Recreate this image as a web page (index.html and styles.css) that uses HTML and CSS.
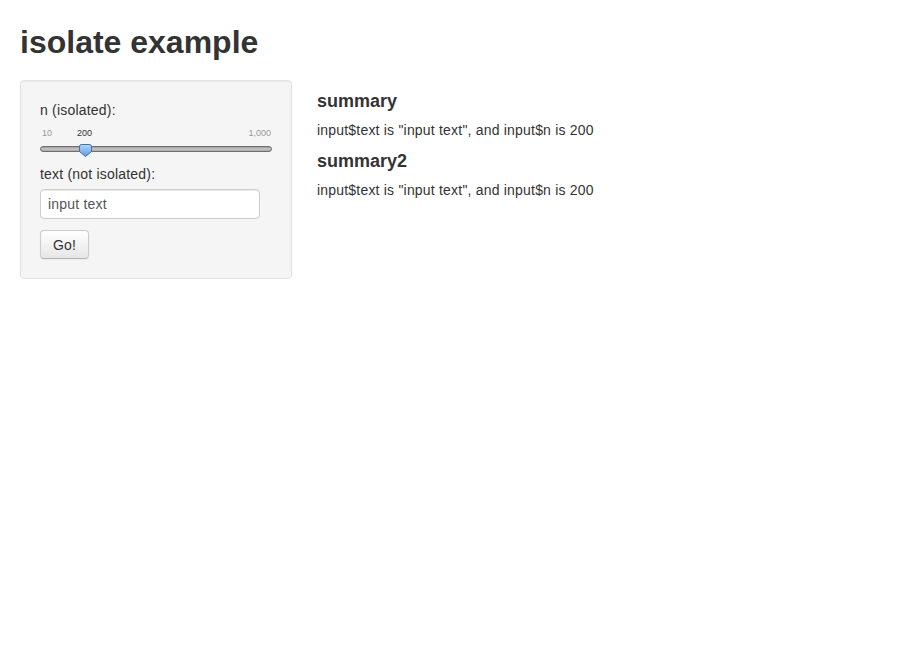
FILE: index.html
```html
<!DOCTYPE html>
<html>
<head>
<meta charset="utf-8">
<link rel="stylesheet" href="styles.css">
</head>
<body>
<div class="page">
  <h1 class="title">isolate example</h1>
  <div class="row">
    <div class="well">
      <label class="lbl">n (isolated):</label>
      <div class="slider">
        <div class="ticks">
          <span class="tmin">10</span>
          <span class="tval">200</span>
          <span class="tmax">1,000</span>
        </div>
        <div class="track">
          <svg class="handle" width="13" height="13" viewBox="0 0 13 13">
            <defs>
              <linearGradient id="hg" x1="0" y1="0" x2="0" y2="1">
                <stop offset="0" stop-color="#b3d6f7"/>
                <stop offset="1" stop-color="#5d9de2"/>
              </linearGradient>
            </defs>
            <path d="M2.5 0.5 H10.5 Q12.5 0.5 12.5 2.5 V7.5 L6.5 12.5 L0.5 7.5 V2.5 Q0.5 0.5 2.5 0.5 Z" fill="url(#hg)" stroke="#3d6fa8" stroke-width="1"/>
          </svg>
        </div>
      </div>
      <label class="lbl lbl2">text (not isolated):</label>
      <input class="txt" type="text" value="input text">
      <button class="btn">Go!</button>
    </div>
    <div class="main">
      <h3 class="h3">summary</h3>
      <p class="out">input$text is "input text", and input$n is 200</p>
      <h3 class="h3">summary2</h3>
      <p class="out">input$text is "input text", and input$n is 200</p>
    </div>
  </div>
</div>
</body>
</html>
```
FILE: styles.css
```css
html, body {
  margin: 0;
  padding: 0;
  background: #fff;
}
body {
  font-family: "Liberation Sans", Arial, sans-serif;
  font-size: 14px;
  line-height: 20px;
  letter-spacing: 0.2px;
  color: #333;
}
.page {
  padding: 0 20px;
}
.title {
  margin: 0;
  padding-top: 22px;
  font-size: 32px;
  line-height: 40px;
  font-weight: bold;
  letter-spacing: 0;
  color: #333;
  height: 58px;
}
.row {
  display: flex;
  gap: 25px;
  align-items: flex-start;
}
.well {
  width: 232px;
  padding: 19px;
  background: #f5f5f5;
  border: 1px solid #e3e3e3;
  border-radius: 4px;
  box-shadow: inset 0 1px 1px rgba(0,0,0,0.05);
  display: flex;
  flex-direction: column;
  align-items: flex-start;
}
.lbl {
  display: block;
  font-size: 14px;
  line-height: 20px;
  color: #333;
  margin-bottom: 6px;
}
.slider {
  width: 232px;
  margin-bottom: 12px;
}
.ticks {
  position: relative;
  height: 14px;
  font-size: 9px;
  line-height: 15px;
  letter-spacing: 0;
  color: #999;
}
.tmin {
  position: absolute;
  left: 2px;
  top: 0;
}
.tval {
  position: absolute;
  left: 37px;
  top: 0;
  color: #333;
}
.tmax {
  position: absolute;
  right: 1px;
  top: 0;
}
.track {
  position: relative;
  margin-top: 6px;
  height: 6px;
  border-radius: 3px;
  border: 1px solid #6f6f6f;
  box-sizing: border-box;
  background: linear-gradient(#9a9a9a, #c8c8c8 50%, #a8a8a8);
}
.handle {
  position: absolute;
  left: 38px;
  top: -3px;
  display: block;
}
.lbl2 {
  margin-bottom: 5px;
}
.txt {
  box-sizing: border-box;
  width: 220px;
  height: 30px;
  padding: 4px 7px;
  margin: 0 0 11px 0;
  font-family: "Liberation Sans", Arial, sans-serif;
  font-size: 14px;
  letter-spacing: 0.2px;
  color: #555;
  background: #fff;
  border: 1px solid #ccc;
  border-radius: 4px;
  box-shadow: inset 0 1px 1px rgba(0,0,0,0.075);
  outline: none;
}
.btn {
  box-sizing: border-box;
  width: 49px;
  height: 29px;
  padding: 0;
  font-family: "Liberation Sans", Arial, sans-serif;
  font-size: 14px;
  letter-spacing: 0.2px;
  color: #333;
  background: linear-gradient(#ffffff, #e6e6e6);
  border: 1px solid #cccccc;
  border-bottom-color: #b3b3b3;
  border-radius: 4px;
  box-shadow: inset 0 1px 0 rgba(255,255,255,0.2), 0 1px 2px rgba(0,0,0,0.05);
}
.main {
  padding-top: 10px;
}
.h3 {
  margin: 0;
  font-size: 18px;
  line-height: 22px;
  font-weight: bold;
  letter-spacing: 0;
  color: #333;
}
.out {
  margin: 8px 0 10px 0;
  font-size: 14px;
  line-height: 20px;
}
```
